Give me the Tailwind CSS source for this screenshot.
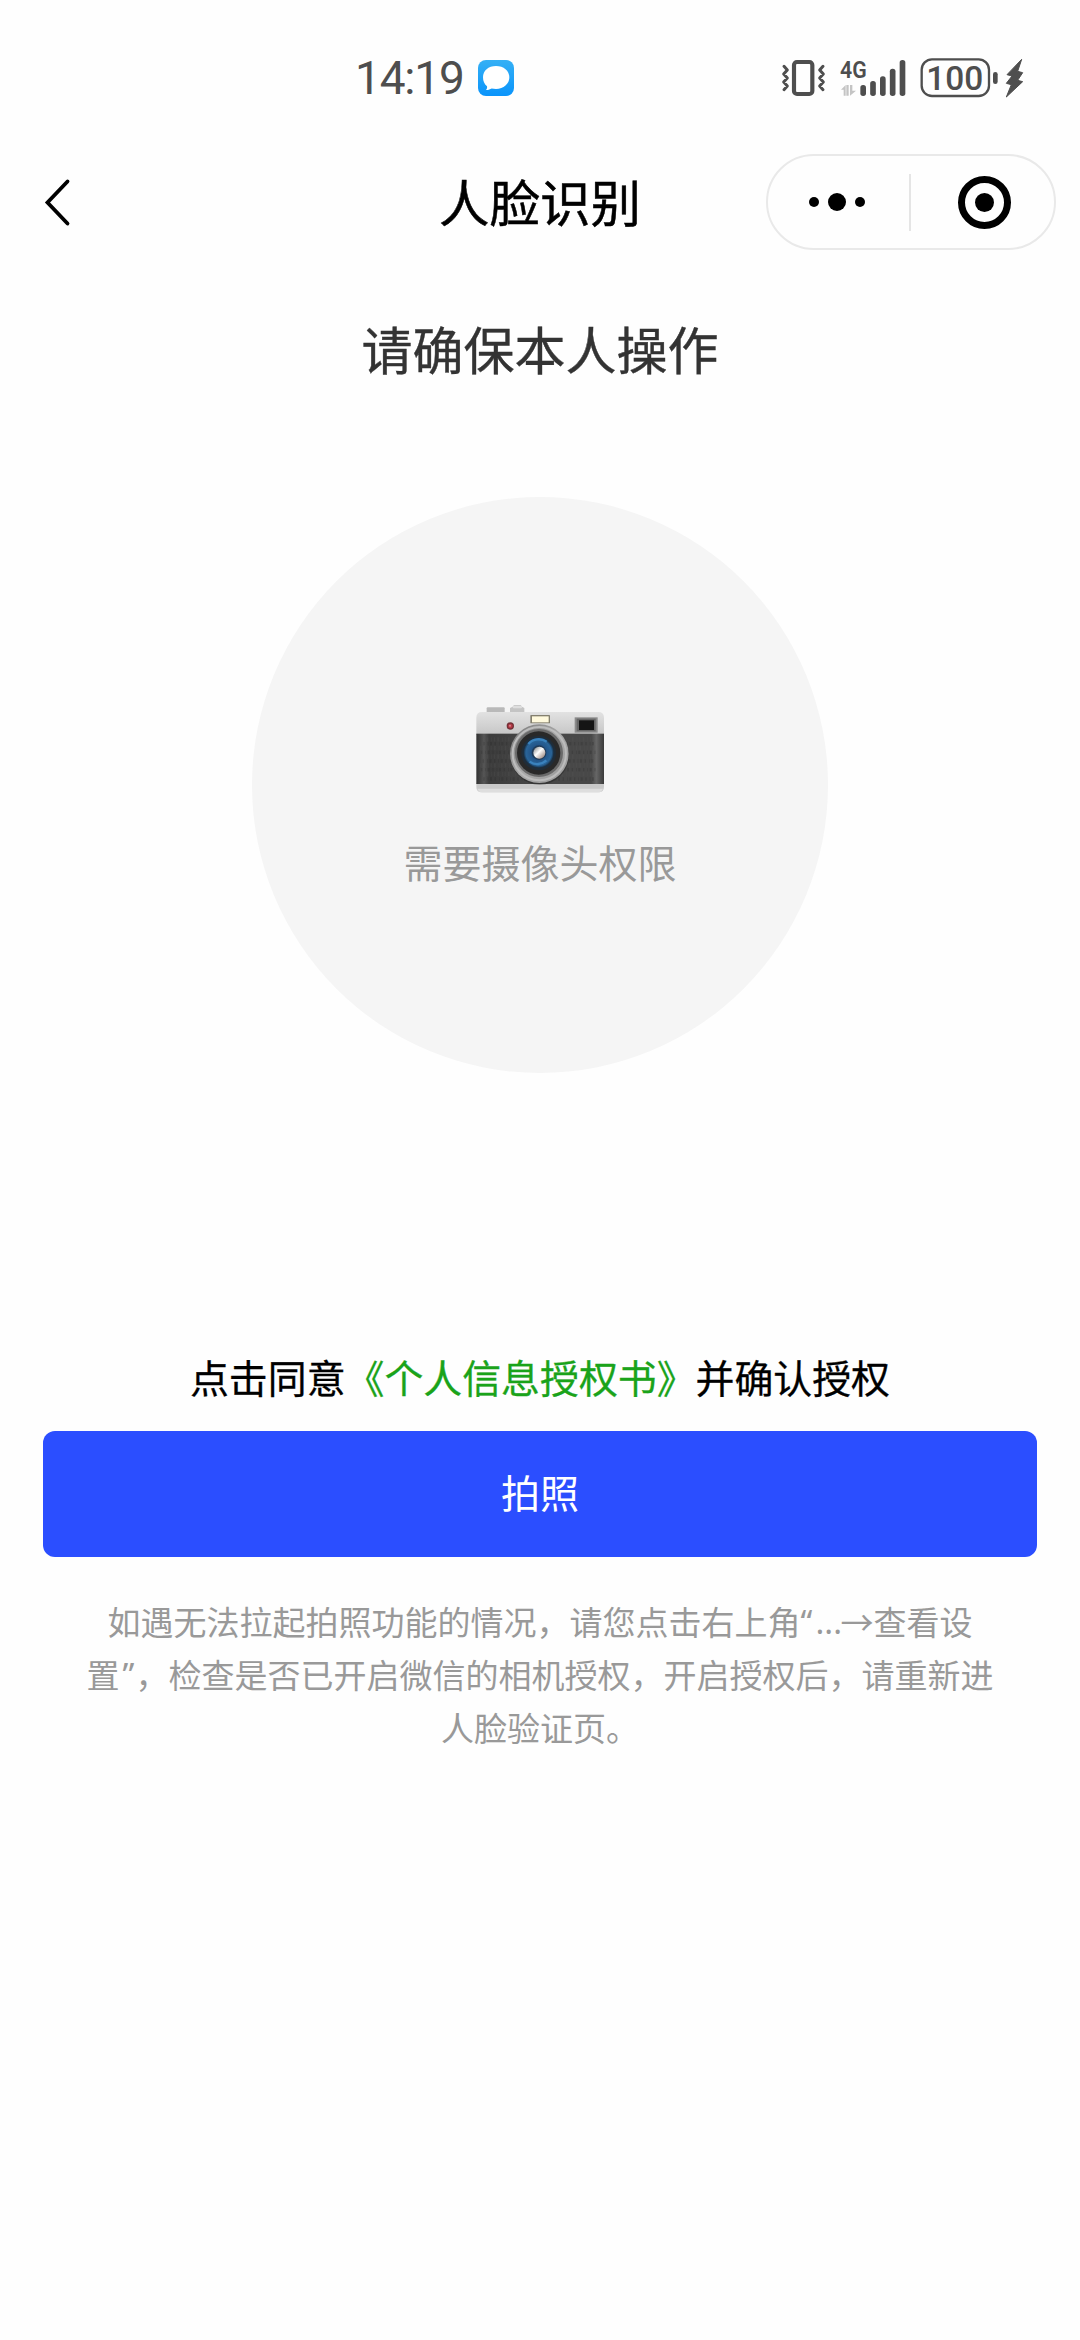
<!DOCTYPE html>
<html lang="zh-CN">
<head>
<meta charset="utf-8">
<title>人脸识别</title>
<script src="https://cdn.jsdelivr.net/npm/@tailwindcss/browser@4"></script>
</head>
<body class="bg-white">
<div class="flex h-[2340px] w-[1080px] flex-col overflow-hidden bg-[#fefefe] font-['Noto_Sans_CJK_SC',sans-serif] text-black">

  <!-- status bar -->
  <header class="flex h-[149px] shrink-0 items-start justify-between pt-10 pr-10 pl-[355px]">
    <div class="flex h-20 items-center">
      <span class="-mt-1 w-[123px] font-['Roboto',sans-serif] text-[46px] leading-none font-[450] tracking-[-1.2px] whitespace-nowrap text-[#4e4e4e]">14:19</span>
      <svg class="-mt-1 h-9 w-9" viewBox="0 0 108 108">
        <defs><linearGradient id="msg" x1="0" y1="0" x2="0" y2="1"><stop offset="0" stop-color="#35b0f5"/><stop offset="1" stop-color="#0a94fb"/></linearGradient></defs>
        <rect width="108" height="108" rx="24" fill="url(#msg)"/>
        <path d="M54 18c23 0 40 14 40 34S77 87 54 87c-5 0-9-.5-13-1.500-5 3-11 5-17 4.500 3-3 4-7 3-11C19 72 15 63 15 52c0-20 16-34 39-34z" fill="#fff"/>
      </svg>
    </div>
    <svg class="h-20 w-[270px]" viewBox="0 0 810 240" fill="none">
      <rect x="72" y="66" width="55" height="96" rx="9" stroke="#4e4e4e" stroke-width="12.500"/>
      <path d="M42 79l10 11-11 12 11 12-11 12 11 12-10 11M159 79l-10 11 11 12-11 12 11 12-11 12 10 11" stroke="#4e4e4e" stroke-width="9" stroke-linecap="round" stroke-linejoin="round"/>
      <text x="210" y="113" font-family="Roboto, sans-serif" font-weight="600" font-size="73" textLength="80" lengthAdjust="spacingAndGlyphs" fill="#4e4e4e">4G</text>
      <path d="M213 149l14-14v32h-6v-18zM229 135h7v32h-7zM240 135h7v17h11l-18 15z" fill="#c4c4c4"/>
      <g fill="#4e4e4e">
        <rect x="271" y="135" width="17" height="33" rx="8"/>
        <rect x="300.500" y="123" width="17" height="45" rx="8"/>
        <rect x="330" y="109" width="17" height="59" rx="8"/>
        <rect x="359.500" y="86" width="17" height="82" rx="8"/>
        <rect x="389" y="60" width="17" height="108" rx="8"/>
        <rect x="669" y="96" width="14" height="36" rx="7"/>
        <path d="M755 58l-44 46 15 4-17 22 15 4-15 37 49-46-15-4 15-23-15-4z" stroke="#4e4e4e" stroke-width="3" stroke-linejoin="round"/>
      </g>
      <rect x="455" y="58" width="202" height="110" rx="31" stroke="#4e4e4e" stroke-width="7"/>
      <text x="469" y="149" font-family="Roboto, sans-serif" font-weight="500" font-size="101" textLength="171" lengthAdjust="spacingAndGlyphs" fill="#4e4e4e">100</text>
    </svg>
  </header>

  <!-- navigation bar -->
  <nav class="grid h-[106px] shrink-0 grid-cols-3 items-center pr-6 pl-11">
    <svg class="h-[50px] w-7" viewBox="0 0 28 50" fill="none"><path d="M23.500 4.500L3.500 25.500l20 21" stroke="#000" stroke-width="3.800" stroke-linecap="round" stroke-linejoin="miter"/></svg>
    <h1 class="-mt-1 -ml-5 text-center text-[50.500px] leading-[72px] font-normal whitespace-nowrap [-webkit-text-stroke:0.5px_#000]">人脸识别</h1>
    <div class="flex h-24 w-[290px] items-center justify-self-end rounded-full border-2 border-[#e9e9e9]">
      <svg class="h-[92px] w-[286px]" viewBox="0 0 286 92">
        <circle cx="46" cy="46" r="5"/><circle cx="69" cy="46" r="9"/><circle cx="92" cy="46" r="5"/>
        <path d="M142 18v57" stroke="#dcdcdc" stroke-width="1.500"/>
        <circle cx="216.500" cy="46.500" r="23" fill="none" stroke="#000" stroke-width="7"/><circle cx="216.500" cy="46.500" r="9.500"/>
      </svg>
    </div>
  </nav>

  <main class="flex flex-col items-center">
    <h2 class="mt-14 text-[51px] leading-[74px] font-normal text-[#333] [-webkit-text-stroke:0.4px_#333]">请确保本人操作</h2>

    <div class="mt-28 flex h-[576px] w-[576px] flex-col items-center rounded-full bg-[#f5f5f5] pt-[183px]">
      <svg class="h-[130px] w-[180px]" viewBox="0 0 540 390">
        <defs>
          <linearGradient id="top" x1="0" y1="0" x2="0" y2="1"><stop offset="0" stop-color="#e2e2e2"/><stop offset="1" stop-color="#c6c6c6"/></linearGradient>
          <linearGradient id="leather" x1="0" y1="0" x2="1" y2="0"><stop offset="0" stop-color="#303030"/><stop offset=".06" stop-color="#555"/><stop offset=".1" stop-color="#3c3c3c"/><stop offset=".5" stop-color="#484848"/><stop offset=".9" stop-color="#484848"/><stop offset=".94" stop-color="#666"/><stop offset="1" stop-color="#3a3a3a"/></linearGradient>
          <linearGradient id="ring" x1="0" y1="0" x2="1" y2="1"><stop offset="0" stop-color="#777"/><stop offset=".5" stop-color="#aaa"/><stop offset="1" stop-color="#999"/></linearGradient>
          <radialGradient id="lens"><stop offset="0" stop-color="#1c3c60"/><stop offset=".5" stop-color="#225488"/><stop offset=".85" stop-color="#2a6599"/><stop offset="1" stop-color="#17334d"/></radialGradient>
          <linearGradient id="glint" x1="0" y1="0" x2="1" y2="1"><stop offset="0" stop-color="#777"/><stop offset=".45" stop-color="#fff"/><stop offset="1" stop-color="#876f65"/></linearGradient>
        </defs>
        <rect x="110" y="82" width="54" height="18" rx="3" fill="#b9b9b9"/>
        <path d="M180 98V84l8-4 4-5h20l4 5 7 4v14z" fill="#c4c4c4"/>
        <rect x="188" y="77" width="28" height="8" rx="3" fill="#dedede"/>
        <path d="M79 165v-52q0-17 17-17h349q17 0 17 17v52z" fill="url(#top)"/>
        <path d="M79 308h383v12q0 17-17 17H96q-17 0-17-17z" fill="#c9c9c9"/>
        <path d="M82 326h377q-4 11-14 11H96q-10 0-14-11z" fill="#dedede"/>
        <rect x="79" y="161" width="383" height="151" fill="url(#leather)"/>
        <path d="M100 178h335M90 204h350M100 230h335M90 256h350M100 282h335" stroke="#5b5b5b" stroke-width="13" stroke-dasharray="3 7 5 9 2 6" opacity=".22"/>
        <path d="M100 191h335M93 217h345M98 243h335M93 269h345M100 297h335" stroke="#222" stroke-width="10" stroke-dasharray="4 9 2 5 6 8" opacity=".2"/>
        <rect x="241" y="105" width="59" height="25" rx="2" fill="#84806f"/><rect x="246" y="109" width="50" height="18" fill="#fff9dc"/>
        <rect x="374" y="112" width="69" height="46" fill="#8b8b8b"/><rect x="380" y="116" width="57" height="38" fill="#666"/><rect x="387" y="121" width="45" height="29" fill="#151515"/>
        <circle cx="181" cy="138" r="11" fill="#743238"/><circle cx="181" cy="138" r="7" fill="#b73845"/><circle cx="180" cy="137" r="3" fill="#d28b91"/>
        <circle cx="269" cy="226" r="88" fill="#222" opacity=".45"/>
        <circle cx="268" cy="221" r="88" fill="url(#ring)"/>
        <circle cx="268" cy="221" r="80" fill="none" stroke="#bcbcbc" stroke-width="6"/>
        <circle cx="267" cy="219" r="72" fill="#6a6a6a"/>
        <circle cx="266" cy="219" r="65" fill="#292929"/>
        <circle cx="266" cy="219" r="52" fill="#202d39"/>
        <circle cx="266" cy="218" r="45" fill="url(#lens)"/>
        <path d="M235 192a42 42 0 0 1 55-7M239 245a39 39 0 0 0 50-4" fill="none" stroke="#3a82bd" stroke-width="7"/>
        <circle cx="267" cy="218" r="22" fill="#203b58"/>
        <circle cx="268" cy="218" r="18" fill="url(#glint)"/>
      </svg>
      <p class="mt-[23px] text-[39px] leading-[56px] text-[#999]">需要摄像头权限</p>
    </div>

    <p class="mt-[275px] text-[38.900px] leading-[56px] whitespace-nowrap [-webkit-text-stroke:0.3px]">点击同意<span class="text-[#1aa31a]">《个人信息授权书》</span>并确认授权</p>

    <button class="mt-[27px] h-[126px] w-[994px] rounded-xl bg-[#2b4eff] pb-1.5 text-[39px] leading-[56px] text-white">拍照</button>

    <div class="mt-[38px] flex flex-col items-center text-[33px] leading-[53px] whitespace-nowrap text-[#999]">
      <p class="flex">如遇无法拉起拍照功能的情况，请您点击右上角<span class="w-[15px] font-['Noto_Sans',sans-serif]">“</span><span class="w-[25px] font-['Noto_Sans',sans-serif]">...</span>→查看设</p>
      <p class="flex">置<span class="w-[16px] pl-[3px] font-['Noto_Sans',sans-serif]">”</span>，检查是否已开启微信的相机授权，开启授权后，请重新进</p>
      <p>人脸验证页。</p>
    </div>
  </main>
</div>
</body>
</html>
